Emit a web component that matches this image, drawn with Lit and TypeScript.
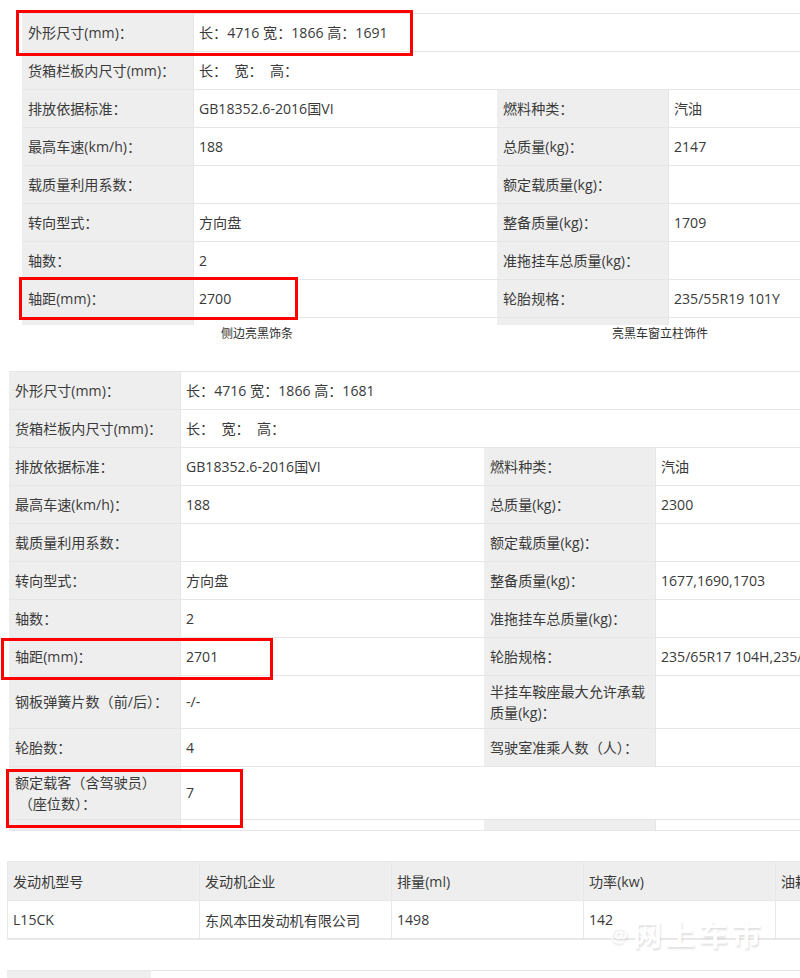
import { LitElement, html, css } from "lit";
import { customElement } from "lit/decorators.js";

type Row = { tall?: boolean; thin?: boolean; cells: [string, string, string?, string?] };

const t1: Row[] = [
  { cells: ["外形尺寸(mm)：", "长：4716 宽：1866 高：1691"] },
  { cells: ["货箱栏板内尺寸(mm)：", "长：&nbsp; 宽：&nbsp; 高："] },
  { cells: ["排放依据标准：", "GB18352.6-2016国VI", "燃料种类：", "汽油"] },
  { cells: ["最高车速(km/h)：", "188", "总质量(kg)：", "2147"] },
  { cells: ["载质量利用系数：", "", "额定载质量(kg)：", ""] },
  { cells: ["转向型式：", "方向盘", "整备质量(kg)：", "1709"] },
  { cells: ["轴数：", "2", "准拖挂车总质量(kg)：", ""] },
  { cells: ["轴距(mm)：", "2700", "轮胎规格：", "235/55R19 101Y"] },
  { cells: ["", "", "", ""] },
];
const t2: Row[] = [
  { cells: ["外形尺寸(mm)：", "长：4716 宽：1866 高：1681"] },
  { cells: ["货箱栏板内尺寸(mm)：", "长：&nbsp; 宽：&nbsp; 高："] },
  { cells: ["排放依据标准：", "GB18352.6-2016国VI", "燃料种类：", "汽油"] },
  { cells: ["最高车速(km/h)：", "188", "总质量(kg)：", "2300"] },
  { cells: ["载质量利用系数：", "", "额定载质量(kg)：", ""] },
  { cells: ["转向型式：", "方向盘", "整备质量(kg)：", "1677,1690,1703"] },
  { cells: ["轴数：", "2", "准拖挂车总质量(kg)：", ""] },
  { cells: ["轴距(mm)：", "2701", "轮胎规格：", "235/65R17 104H,235/60R18 103H"] },
  { tall: true, cells: ["钢板弹簧片数（前/后）：", "-/-", "半挂车鞍座最大允许承载质量(kg)：", ""] },
  { cells: ["轮胎数：", "4", "驾驶室准乘人数（人）：", ""] },
  { tall: true, cells: ["额定载客（含驾驶员）<br>&nbsp;（座位数）：", "7"] },
  { thin: true, cells: ["", "", "", ""] },
];

const raw = (s: string) => {
  const t = document.createElement("template");
  t.innerHTML = s;
  return t.content.cloneNode(true);
};

@customElement("app-root")
export class AppRoot extends LitElement {
  static styles = css`
    :host {
      display: block;
      position: relative;
      width: 800px;
      height: 978px;
      overflow: hidden;
      background: #fff;
      font-family: "Open Sans", "Noto Sans CJK SC", sans-serif;
      font-size: 14.1px;
      color: #3a3a3a;
    }
    .spec {
      overflow: hidden;
      border-top: 1px solid #e6e6e6;
    }
    .spec.a { margin: 13px 0 0 22px; height: 311px; }
    .spec.b { margin: 0 0 0 9px; height: 459px; }
    .row {
      display: grid;
      grid-template-columns: 172px 303px 172px 1fr;
      height: 38px;
      box-sizing: border-box;
      border-bottom: 1px solid #e6e6e6;
      white-space: nowrap;
    }
    .row.tall { height: 53px; }
    .row.thin { height: 11px; }
    .row > div {
      display: flex;
      align-items: center;
      padding: 0 0 0 6px;
      line-height: 21px;
      overflow: hidden;
    }
    .row.tall > div { padding-bottom: 1px; }
    .row > .l {
      background: #eee;
      border-right: 1px solid #e6e6e6;
      white-space: normal;
      padding-right: 4px;
      display: block;
      align-self: stretch;
    }
    .row > .l > span { display: flex; align-items: center; height: 100%; }
    .row > .v { padding-left: 5px; }
    .row > .span { grid-column: 2 / 5; }
    .caps {
      display: grid;
      grid-template-columns: 391px auto;
      padding-left: 221px;
      height: 46px;
      font-size: 12px;
      line-height: 18px;
      color: #2e2e2e;
    }
    .engine {
      margin: 30px 0 0 7px;
      display: grid;
      grid-template-columns: repeat(5, 192px);
      border-top: 1px solid #e8e8e8;
      border-bottom: 2px solid #e8e8e8;
      border-left: 1px solid #e8e8e8;
      width: 793px;
      overflow: hidden;
    }
    .engine > div {
      height: 37px;
      box-sizing: border-box;
      padding-left: 5px;
      display: flex;
      align-items: center;
      border-right: 1px solid #e8e8e8;
      white-space: nowrap;
    }
    .engine > .h { background: #eee; height: 39px; border-bottom: 1px solid #e8e8e8; }
    .next {
      margin: 30px 0 0 7px;
      height: 10px;
      border-top: 1px solid #e8e8e8;
    }
    .next div { width: 144px; height: 10px; background: #eee; }
    .mark {
      position: absolute;
      border: 3px solid #f00;
      box-sizing: border-box;
    }
    .m1 { left: 16px; top: 10px; width: 397px; height: 46px; }
    .m2 { left: 19px; top: 277px; width: 279px; height: 43px; }
    .m3 { left: 1px; top: 638px; width: 272px; height: 42px; }
    .m4 { left: 6px; top: 769px; width: 237px; height: 59px; }
    .wm {
      position: absolute;
      left: 610px;
      top: 916px;
      display: flex;
      align-items: center;
      gap: 5px;
      color: #fff;
      font-size: 29px;
      font-weight: 700;
      letter-spacing: 4px;
      line-height: 38px;
      white-space: nowrap;
      text-shadow: 1px 2px 2px rgba(0, 0, 0, 0.12);
    }
    .wm small { font-size: 20px; font-weight: 400; letter-spacing: 0; }
  `;

  private spec(cls: string, rows: Row[]) {
    return html`<div class="spec ${cls}">
      ${rows.map((r) => {
        const [a, b, c, d] = r.cells;
        const two = c === undefined;
        return html`<div class="row ${r.tall ? "tall" : ""} ${r.thin ? "thin" : ""}">
          <div class="l"><span><span>${raw(a)}</span></span></div>
          <div class="v ${two ? "span" : ""}">${raw(b)}</div>
          ${two
            ? ""
            : html`<div class="l"><span><span>${raw(c!)}</span></span></div>
                <div class="v">${raw(d ?? "")}</div>`}
        </div>`;
      })}
    </div>`;
  }

  render() {
    return html`
      ${this.spec("a", t1)}
      <div class="caps"><span>侧边亮黑饰条</span><span>亮黑车窗立柱饰件</span></div>
      ${this.spec("b", t2)}
      <div class="engine">
        <div class="h">发动机型号</div>
        <div class="h">发动机企业</div>
        <div class="h">排量(ml)</div>
        <div class="h">功率(kw)</div>
        <div class="h">油耗</div>
        <div>L15CK</div>
        <div>东风本田发动机有限公司</div>
        <div>1498</div>
        <div>142</div>
        <div></div>
      </div>
      <div class="next"><div></div></div>
      <div class="mark m1"></div>
      <div class="mark m2"></div>
      <div class="mark m3"></div>
      <div class="mark m4"></div>
      <div class="wm"><small>@</small><span>网上车市</span></div>
    `;
  }
}
